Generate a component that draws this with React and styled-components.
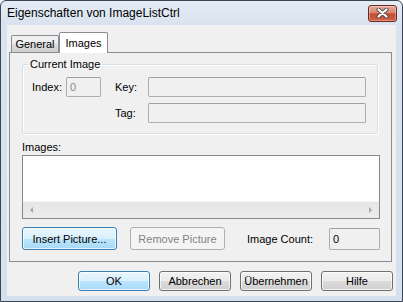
import React from 'react';
import styled, { createGlobalStyle } from 'styled-components';

const GlobalStyle = createGlobalStyle`
  html, body {
    margin: 0;
    padding: 0;
    background: #ffffff;
  }
  body {
    font-family: "Liberation Sans", Arial, sans-serif;
    font-size: 11px;
    color: #000;
  }
  * {
    box-sizing: border-box;
  }
`;

const Window = styled.div`
  width: 403px;
  height: 302px;
  border: 1px solid #3b4553;
  border-radius: 6px 6px 0 0;
  background: linear-gradient(180deg, #e4ecf6 0%, #d8e3ef 24px, #d4e0ed 100%);
  display: flex;
  flex-direction: column;
`;

const TitleBar = styled.div`
  height: 24px;
  flex: none;
  display: flex;
  align-items: center;
  justify-content: space-between;
  padding: 0 5px 0 6px;
`;

const Title = styled.span`
  font-size: 12px;
  color: #000;
`;

const CloseButton = styled.div`
  width: 29px;
  height: 17px;
  border: 1px solid #6a2a1f;
  border-radius: 3px;
  background: linear-gradient(180deg, #e9aa9b 0%, #d98671 45%, #c54b31 52%, #cf6044 100%);
  box-shadow: inset 0 0 0 1px rgba(255, 255, 255, 0.35);
  display: flex;
  align-items: center;
  justify-content: center;
`;

const Client = styled.div`
  flex: 1;
  margin: 0 6px 5px 6px;
  background: #f0f0f0;
  padding: 7px 3px 0 0;
  display: flex;
  flex-direction: column;
`;

const TabStrip = styled.div`
  height: 20px;
  display: flex;
  align-items: flex-end;
  padding-left: 4px;
  position: relative;
  z-index: 1;
`;

const Tab = styled.div`
  width: ${p => p.$width}px;
  height: ${p => (p.$active ? 21 : 17)}px;
  margin-bottom: ${p => (p.$active ? -1 : 0)}px;
  border: 1px solid #898c95;
  border-bottom: none;
  border-radius: 2px 2px 0 0;
  background: ${p =>
    p.$active
      ? '#ffffff'
      : 'linear-gradient(180deg, #f2f2f2 0%, #ebebeb 50%, #dddddd 51%, #cfcfcf 100%)'};
  display: flex;
  align-items: center;
  justify-content: center;
  padding-bottom: ${p => (p.$active ? 1 : 0)}px;
`;

const Panel = styled.div`
  margin-left: 2px;
  width: 383px;
  border: 1px solid #898c95;
  background: #f0f0f0;
  padding: 5px 11px 11px 12px;
  display: flex;
  flex-direction: column;
`;

const Group = styled.fieldset`
  margin: 0 2px 0 0;
  padding: 0 0 10px 9px;
  border: 1px solid #d5dfe5;
  border-radius: 3px;
  box-shadow: inset 1px 1px 0 #ffffff, 1px 1px 0 #ffffff;
`;

const Legend = styled.legend`
  padding: 0 2px;
  margin-left: -4px;
  line-height: 13px;
  font-size: 11px;
`;

const FieldGrid = styled.div`
  margin-top: 6px;
  display: grid;
  grid-template-columns: 34px 35px 47px 218px;
  grid-auto-rows: 20px;
  row-gap: 6px;
`;

const Label = styled.span`
  display: flex;
  align-items: center;
  padding-left: ${p => p.$indent || 0}px;
  grid-column: ${p => p.$col || 'auto'};
`;

const TextBox = styled.div`
  width: ${p => (p.$width ? `${p.$width}px` : 'auto')};
  height: ${p => p.$height || 20}px;
  border: 1px solid #abadb3;
  border-top-color: #a0a0a0;
  border-radius: 2px;
  background: #f0f0f0;
  color: ${p => (p.$disabled ? '#8b8b8b' : '#000')};
  display: flex;
  align-items: center;
  padding-left: 3px;
  grid-column: ${p => p.$col || 'auto'};
`;

const Caption = styled.div`
  margin-top: 7px;
  line-height: 13px;
`;

const ListBox = styled.div`
  margin-top: 1px;
  width: 358px;
  height: 64px;
  border: 1px solid #828790;
  background: #ffffff;
  display: flex;
  flex-direction: column;
  justify-content: flex-end;
`;

const HScroll = styled.div`
  height: 17px;
  background: linear-gradient(180deg, #e6e6e6 0%, #ececec 100%);
  border-top: 1px solid #f4f4f4;
  display: flex;
  justify-content: space-between;
`;

const ScrollArrow = styled.div`
  width: 17px;
  display: flex;
  align-items: center;
  justify-content: center;

  &::after {
    content: '';
    border-top: 3px solid transparent;
    border-bottom: 3px solid transparent;
    ${p => (p.$dir === 'left' ? 'border-right' : 'border-left')}: 3px solid #a6a6a6;
  }
`;

const ActionRow = styled.div`
  margin-top: 8px;
  display: flex;
  align-items: center;
  gap: 13px;
`;

const Button = styled.div`
  width: ${p => p.$width}px;
  height: ${p => p.$height}px;
  border-radius: 3px;
  display: flex;
  align-items: center;
  justify-content: center;
  border: 1px solid ${p => (p.$default ? '#3c7fb1' : p.$disabled ? '#adb2b5' : '#707070')};
  color: ${p => (p.$disabled ? '#838383' : '#000')};
  background: ${p =>
    p.$default
      ? 'linear-gradient(180deg, #eaf6fd 0%, #d9f0fc 50%, #bee6fd 51%, #a7d9f5 100%)'
      : p.$disabled
      ? '#f4f4f4'
      : 'linear-gradient(180deg, #f2f2f2 0%, #ebebeb 50%, #dddddd 51%, #cfcfcf 100%)'};
  box-shadow: ${p => (p.$disabled ? 'none' : 'inset 0 0 0 1px rgba(255, 255, 255, 0.7)')};
`;

const CountLabel = styled.span`
  width: 72px;
  margin-left: 9px;
`;

const DialogButtons = styled.div`
  margin-top: 9px;
  display: flex;
  justify-content: flex-end;
  gap: 9px;
`;

function CloseGlyph() {
  return (
    <svg width="13" height="10" viewBox="0 0 13 10">
      <path d="M2.5 1.5 L10.5 8.5 M10.5 1.5 L2.5 8.5" stroke="#4b4b4b" strokeWidth="4" strokeLinecap="round" />
      <path d="M2.5 1.5 L10.5 8.5 M10.5 1.5 L2.5 8.5" stroke="#ffffff" strokeWidth="2.2" strokeLinecap="round" />
    </svg>
  );
}

export default function App() {
  return (
    <>
      <GlobalStyle />
      <Window>
        <TitleBar>
          <Title>Eigenschaften von ImageListCtrl</Title>
          <CloseButton>
            <CloseGlyph />
          </CloseButton>
        </TitleBar>
        <Client>
          <TabStrip>
            <Tab $width={48}>General</Tab>
            <Tab $width={49} $active>Images</Tab>
          </TabStrip>
          <Panel>
            <Group>
              <Legend>Current Image</Legend>
              <FieldGrid>
                <Label>Index:</Label>
                <TextBox $disabled>0</TextBox>
                <Label $indent={14}>Key:</Label>
                <TextBox />
                <Label $indent={14} $col="3">Tag:</Label>
                <TextBox $col="4" />
              </FieldGrid>
            </Group>
            <Caption>Images:</Caption>
            <ListBox>
              <HScroll>
                <ScrollArrow $dir="left" />
                <ScrollArrow $dir="right" />
              </HScroll>
            </ListBox>
            <ActionRow>
              <Button $width={99} $height={23} $default>Insert Picture...</Button>
              <Button $width={99} $height={23} $disabled>Remove Picture</Button>
              <CountLabel>Image Count:</CountLabel>
              <TextBox $width={53} $height={22}>0</TextBox>
            </ActionRow>
          </Panel>
          <DialogButtons>
            <Button $width={72} $height={20} $default>OK</Button>
            <Button $width={72} $height={20}>Abbrechen</Button>
            <Button $width={72} $height={20}>Übernehmen</Button>
            <Button $width={72} $height={20}>Hilfe</Button>
          </DialogButtons>
        </Client>
      </Window>
    </>
  );
}
